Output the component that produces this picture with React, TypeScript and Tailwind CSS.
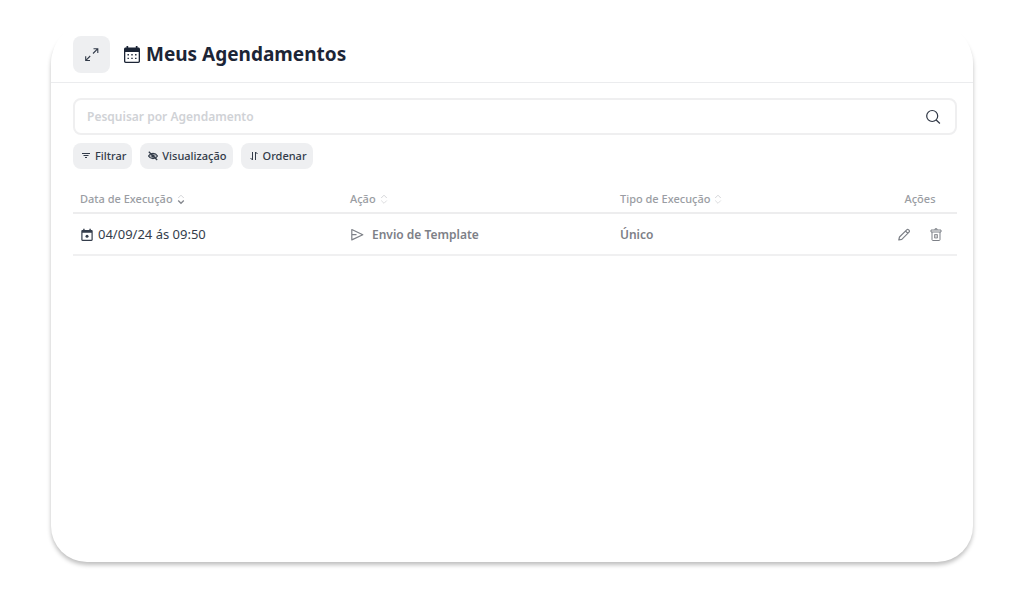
import type { ReactNode } from "react";

type IconProps = { className?: string };

function ExpandIcon() {
  return (
    <svg className="size-4" viewBox="0 0 16 16" fill="none" stroke="currentColor" strokeWidth="1.1" aria-hidden="true">
      <path d="M9.500 1.700h4.300V6M13.600 1.900 9 6.500M1.700 9.200v4.300H6M1.900 13.300 6.200 9" />
    </svg>
  );
}

function CalendarMonthIcon() {
  return (
    <svg className="h-5 w-[18px]" viewBox="0 0 18 20" aria-hidden="true">
      <path
        fill="currentColor"
        fillRule="evenodd"
        d="M3.500 1h1.700v1.500h7.600V1h1.700v1.500h.8c1 0 1.700.7 1.700 1.700v12.100c0 1-.7 1.700-1.700 1.700H2.700C1.700 18 1 17.300 1 16.300V4.200c0-1 .7-1.700 1.700-1.700h.8zM2.300 7v9.200c0 .3.200.5.500.5h12.400c.3 0 .5-.2.500-.5V7z"
      />
      <path fill="currentColor" d="M4.500 9h1.400v1.400H4.500zM8.300 9h1.400v1.400H8.300zM12.100 9h1.400v1.400h-1.400zM4.500 12.700h1.400v1.400H4.500zM8.300 12.700h1.400v1.400H8.300zM12.100 12.700h1.400v1.400h-1.400z" />
    </svg>
  );
}

function SearchIcon() {
  return (
    <svg className="size-4" viewBox="0 0 16 16" fill="none" stroke="currentColor" strokeWidth="1.200" aria-hidden="true">
      <circle cx="7.200" cy="7" r="5.500" />
      <path d="m11.200 11 3.700 3.500" />
    </svg>
  );
}

function FilterIcon() {
  return (
    <svg className="size-2.5" viewBox="0 0 10 10" fill="none" stroke="currentColor" strokeWidth="1" aria-hidden="true">
      <path d="M1 2.500h8M2.500 4.500h5M4 6.500h2" />
    </svg>
  );
}

function HiddenIcon() {
  return (
    <svg className="size-2.5" viewBox="0 0 10 10" fill="none" stroke="currentColor" aria-hidden="true">
      <path d="M.5 5C2.500 1.500 7.500 1.500 9.500 5 7.500 8.500 2.500 8.500.5 5Z" fill="currentColor" fillOpacity=".3" strokeWidth="1.100" />
      <circle cx="5" cy="5" r="1.600" fill="currentColor" stroke="none" />
      <path d="m.8.8 8.400 8.200" strokeWidth="1.300" />
    </svg>
  );
}

function OrderIcon() {
  return (
    <svg className="size-2.5" viewBox="0 0 10 10" fill="none" stroke="currentColor" strokeWidth="1" aria-hidden="true">
      <path d="M3.500 1v8M1.500 7l2 2M6.500 9V1l2 2" />
    </svg>
  );
}

function SortIcon({ active }: { active?: boolean }) {
  return (
    <svg className="h-3 w-2" viewBox="0 0 8 12" fill="none" strokeWidth="1" aria-hidden="true">
      <path d="M1.200 4 4 1.200l2.800 2.800" stroke="#d5d6d9" />
      <path d="M1.200 6.500 4 9.300l2.800-2.800" stroke={active ? "#85888e" : "#dddee0"} strokeWidth={active ? 1.3 : 1} />
    </svg>
  );
}

function EventIcon({ className }: IconProps) {
  return (
    <svg className={className} viewBox="0 0 14 14" aria-hidden="true">
      <path
        fill="currentColor"
        fillRule="evenodd"
        d="M3.200.8h1.400v1.300h4.800V.8h1.400v1.300h.7c.7 0 1.200.5 1.200 1.200v8.500c0 .7-.5 1.200-1.200 1.200h-9c-.7 0-1.200-.5-1.200-1.200V3.300c0-.7.5-1.200 1.200-1.200h.7zM2.500 4.700v7.100h9V4.700z"
      />
      <circle cx="7" cy="8.200" r="1.500" fill="currentColor" />
    </svg>
  );
}

function SendIcon({ className }: IconProps) {
  return (
    <svg className={className} viewBox="0 0 14 14" fill="none" stroke="currentColor" strokeWidth="1.200" strokeLinejoin="round" aria-hidden="true">
      <path d="M1.800 1.500 12.800 6.700 1.800 11.900zM2 6.700h4.500" />
    </svg>
  );
}

function PencilIcon() {
  return (
    <svg className="size-3.5" viewBox="0 0 14 14" fill="none" stroke="currentColor" strokeWidth="1.200" strokeLinejoin="round" aria-hidden="true">
      <path d="m1.800 12 .7-3L9.700 1.800c.6-.6 1.300-.6 1.900 0l.4.400c.6.6.6 1.300 0 1.900L4.800 11.300zM8.500 3l2.300 2.300" />
    </svg>
  );
}

function TrashIcon() {
  return (
    <svg className="size-3.5" viewBox="0 0 14 14" fill="none" stroke="currentColor" strokeWidth="1" aria-hidden="true">
      <path d="M2 2h10v2H2zM6 2V.8h2V2M3 4v7.700c0 .5.300.8.800.8h6.400c.5 0 .8-.3.800-.8V4" />
      <path d="M5.500 6.500h3v3.500h-3zM7 6.500V10" strokeWidth=".8" />
    </svg>
  );
}

function ToolButton({ icon, children }: { icon: ReactNode; children: ReactNode }) {
  return (
    <button type="button" className="flex h-[26px] items-center gap-1 rounded-lg bg-[#eeeff1] pl-2 pr-1.5 text-[11px] font-medium text-[#323b49]">
      {icon}
      {children}
    </button>
  );
}

function ColumnHeader({ children, active }: { children: ReactNode; active?: boolean }) {
  return (
    <th scope="col" className="px-[7px] pt-0.5 text-left font-medium">
      <button type="button" className="flex items-center gap-1">
        {children}
        <SortIcon active={active} />
      </button>
    </th>
  );
}

export default function App() {
  return (
    <div className="flex min-h-screen bg-white px-[51px] pt-7 pb-[29px] font-['Noto_Sans','Open_Sans',sans-serif]">
      <main className="flex-1 rounded-[36px] bg-white shadow-[0_3px_4px_rgba(0,0,0,0.25)]">
        <div className="-mt-2 rounded-t-[44px] bg-white pt-2">
          <header className="flex items-center gap-[13px] border-b border-[#ebecee] px-[22px] pt-2 pb-[9px]">
            <button type="button" aria-label="Expandir" className="flex size-[37px] items-center justify-center rounded-lg bg-[#eeeff1] text-[#323b49]">
              <ExpandIcon />
            </button>
            <h1 className="flex items-center gap-[5px] text-[19px] font-bold text-[#1c2536]">
              <CalendarMonthIcon />
              Meus Agendamentos
            </h1>
          </header>
        </div>
        <div className="pr-4 pl-[22px] pt-[15px]">
          <form role="search" className="flex h-[37px] items-center rounded-lg border-2 border-[#efeff0] pr-[14px] pl-3">
            <input
              type="search"
              aria-label="Pesquisar por Agendamento"
              placeholder="Pesquisar por Agendamento"
              className="min-w-0 flex-1 bg-transparent text-[12px] font-semibold text-[#1c2536] outline-none placeholder:text-[#d0d2d6]"
            />
            <button type="submit" aria-label="Pesquisar" className="text-[#2d3543]">
              <SearchIcon />
            </button>
          </form>
          <div className="mt-2 flex gap-2">
            <ToolButton icon={<FilterIcon />}>Filtrar</ToolButton>
            <ToolButton icon={<HiddenIcon />}>Visualização</ToolButton>
            <ToolButton icon={<OrderIcon />}>Ordenar</ToolButton>
          </div>
          <table className="mt-4 w-full table-fixed border-collapse">
            <colgroup>
              <col />
              <col />
              <col />
              <col className="w-[74px]" />
            </colgroup>
            <thead>
              <tr className="h-7 border-b-2 border-[#ededee] text-[11px] text-[#9a9da3]">
                <ColumnHeader active>Data de Execução</ColumnHeader>
                <ColumnHeader>Ação</ColumnHeader>
                <ColumnHeader>Tipo de Execução</ColumnHeader>
                <th scope="col" className="pt-0.5 text-center font-medium">Ações</th>
              </tr>
            </thead>
            <tbody>
              <tr className="h-[42px] border-b-2 border-[#f0f0f1] text-[12px] font-semibold text-[#7d8087]">
                <td className="px-[7px] pt-0.5 text-[#343d4b]">
                  <span className="flex items-center gap-1 text-[13px] font-normal">
                    <EventIcon className="size-3.5" />
                    04/09/24 ás 09:50
                  </span>
                </td>
                <td className="px-[7px] pt-0.5">
                  <span className="flex items-center gap-2">
                    <SendIcon className="size-3.5" />
                    Envio de Template
                  </span>
                </td>
                <td className="px-[7px] pt-0.5">Único</td>
                <td className="pt-0.5">
                  <div className="flex justify-center gap-[18px]">
                    <button type="button" aria-label="Editar">
                      <PencilIcon />
                    </button>
                    <button type="button" aria-label="Excluir">
                      <TrashIcon />
                    </button>
                  </div>
                </td>
              </tr>
            </tbody>
          </table>
        </div>
      </main>
    </div>
  );
}
